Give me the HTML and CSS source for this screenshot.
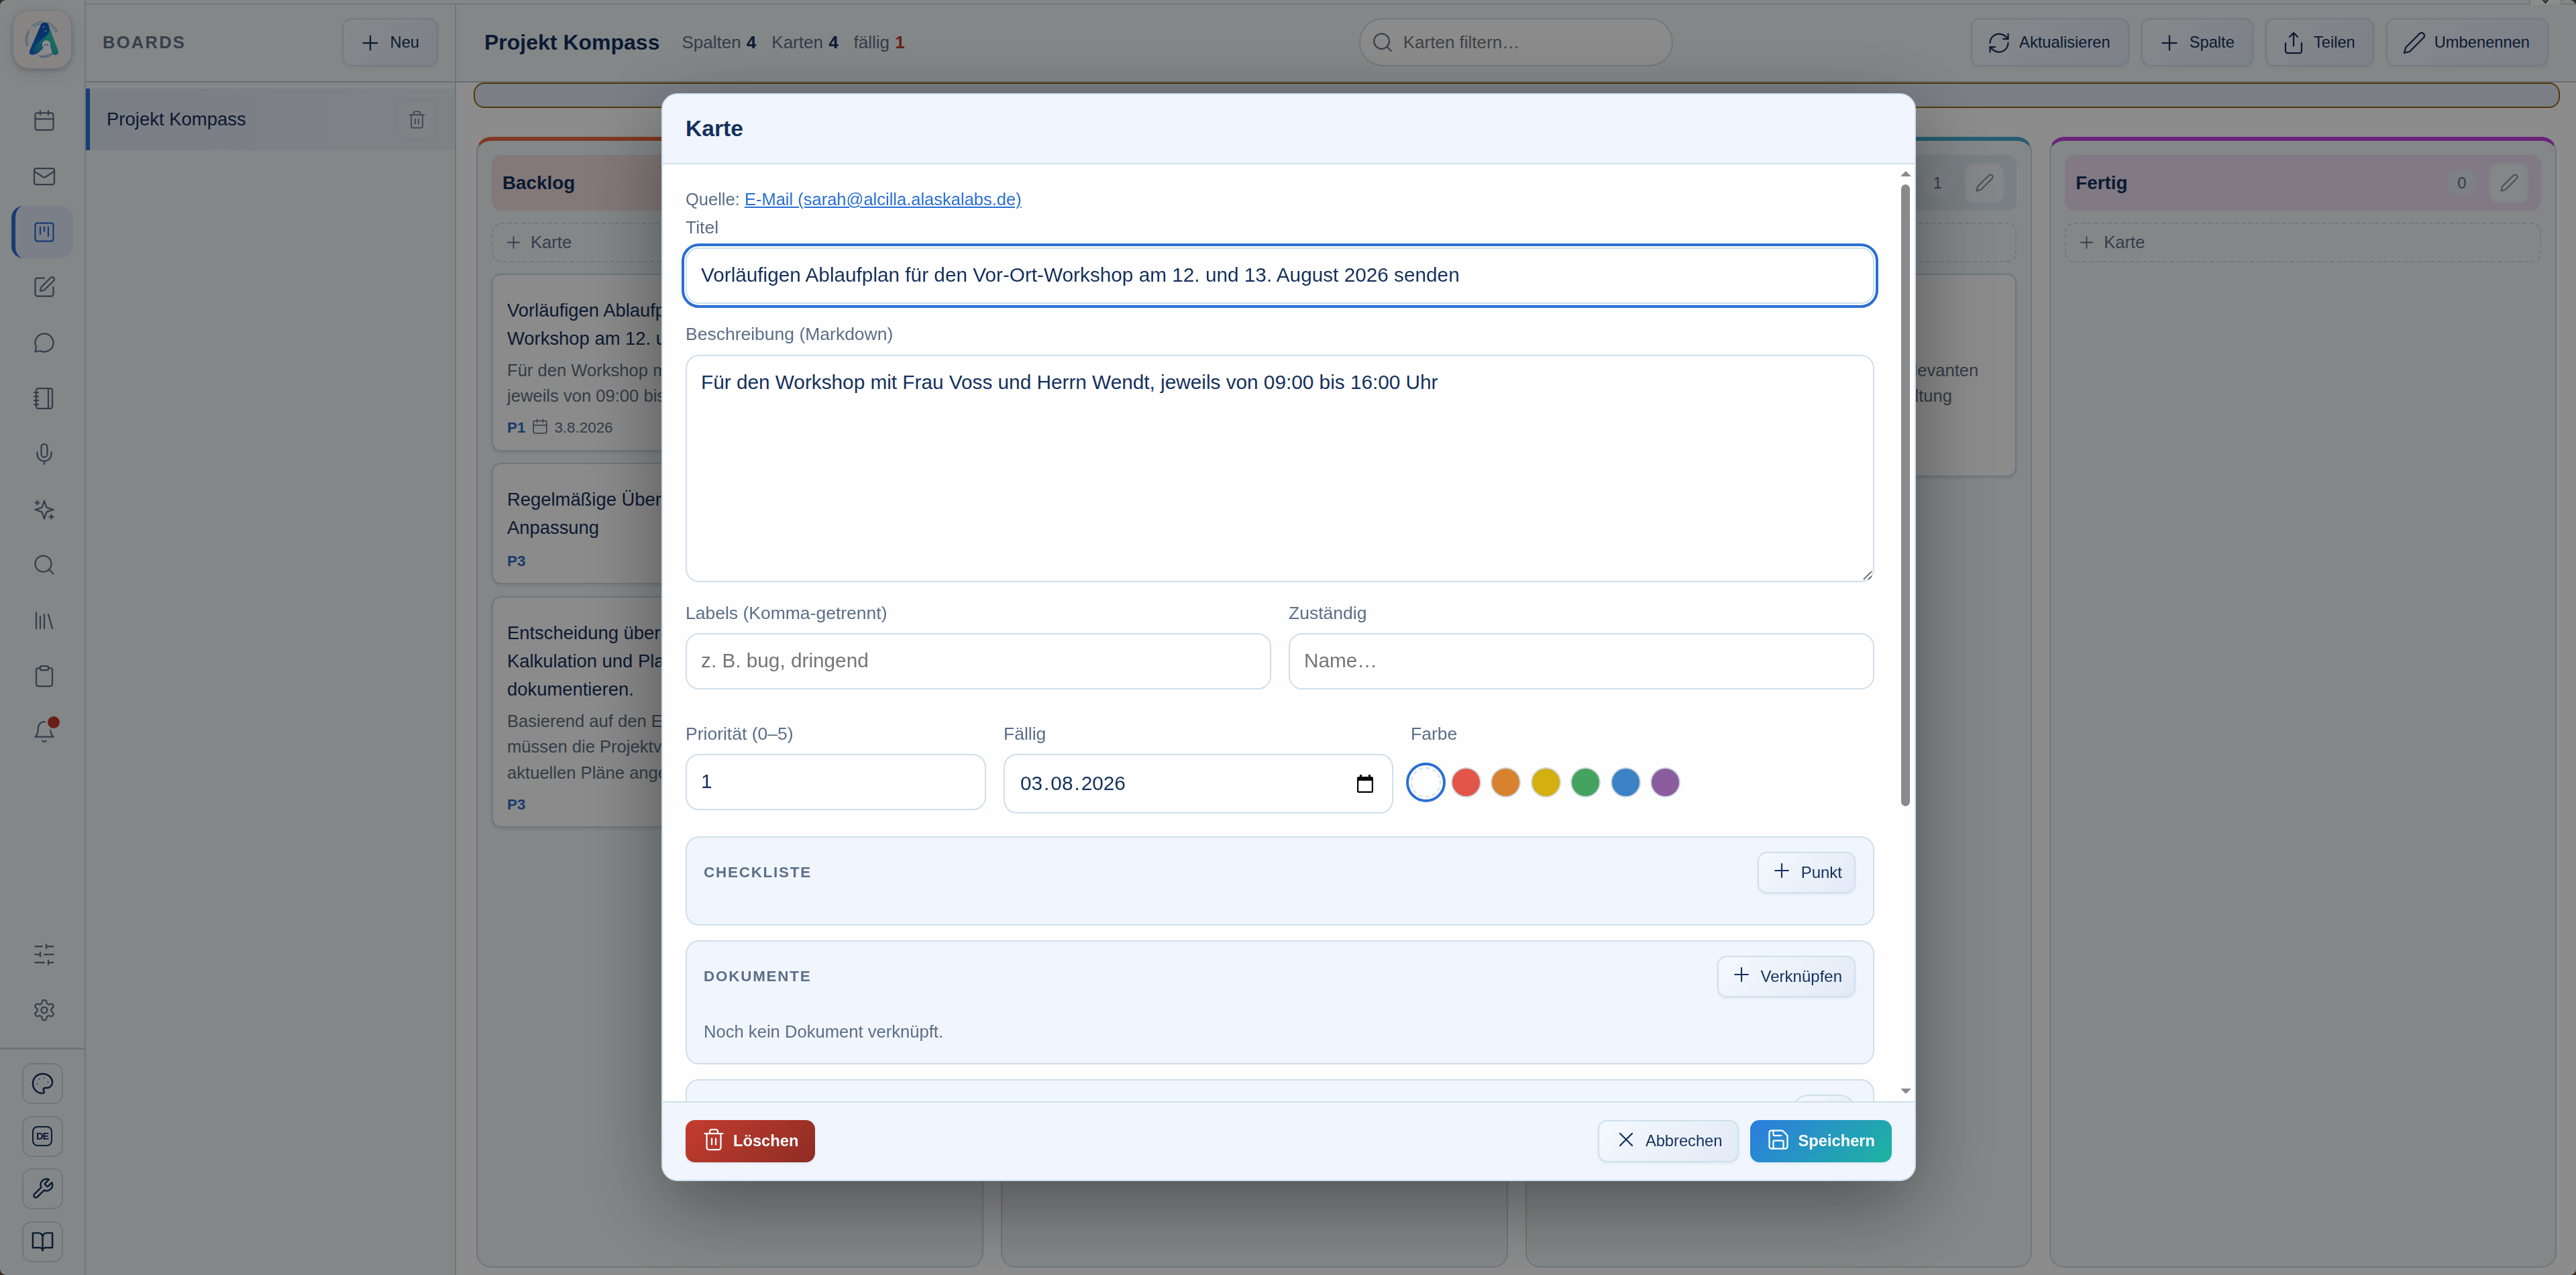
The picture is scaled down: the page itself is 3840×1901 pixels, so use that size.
FILE: index.html
```html
<!DOCTYPE html>
<html lang="de">
<head>
<meta charset="UTF-8">
<meta name="viewport" content="width=device-width, initial-scale=1.0">
<title>Projekt Kompass – Boards</title>
<link rel="stylesheet" href="styles.css">
</head>
<body>

<!-- icon set -->
<svg class="sprite" aria-hidden="true">
  <symbol id="i-calendar" viewBox="0 0 24 24"><rect x="3" y="4.2" width="18" height="17" rx="2"/><path d="M8 2.2v4M16 2.2v4M3 10.2h18"/></symbol>
  <symbol id="i-mail" viewBox="0 0 24 24"><rect x="2" y="4" width="20" height="16" rx="2"/><path d="m22 7-8.97 5.7a1.94 1.94 0 0 1-2.06 0L2 7"/></symbol>
  <symbol id="i-board" viewBox="0 0 24 24"><rect x="3" y="3" width="18" height="18" rx="2"/><path d="M8 7v7M12 7v4M16 7v9"/></symbol>
  <symbol id="i-edit" viewBox="0 0 24 24"><path d="M12 3H5a2 2 0 0 0-2 2v14a2 2 0 0 0 2 2h14a2 2 0 0 0 2-2v-7"/><path d="M18.375 2.625a1 1 0 0 1 3 3l-9.013 9.014a2 2 0 0 1-.853.505l-2.873.84a.5.5 0 0 1-.62-.62l.84-2.873a2 2 0 0 1 .506-.852z"/></symbol>
  <symbol id="i-chat" viewBox="0 0 24 24"><path d="M7.9 20A9 9 0 1 0 4 16.1L3 21z"/></symbol>
  <symbol id="i-notebook" viewBox="0 0 24 24"><path d="M2 6h4M2 10h4M2 14h4M2 18h4"/><rect x="4" y="2" width="16" height="20" rx="2"/><path d="M16 2v20"/></symbol>
  <symbol id="i-mic" viewBox="0 0 24 24"><path d="M12 2a3 3 0 0 0-3 3v7a3 3 0 0 0 6 0V5a3 3 0 0 0-3-3Z"/><path d="M19 10v2a7 7 0 0 1-14 0v-2M12 19v3"/></symbol>
  <symbol id="i-sparkles" viewBox="0 0 24 24"><path d="m12 3-1.912 5.813a2 2 0 0 1-1.275 1.275L3 12l5.813 1.912a2 2 0 0 1 1.275 1.275L12 21l1.912-5.813a2 2 0 0 1 1.275-1.275L21 12l-5.813-1.912a2 2 0 0 1-1.275-1.275L12 3Z"/><path d="M5 3v4M19 17v4M3 5h4M17 19h4"/></symbol>
  <symbol id="i-search" viewBox="0 0 24 24"><circle cx="11" cy="11" r="8"/><path d="m21 21-4.3-4.3"/></symbol>
  <symbol id="i-library" viewBox="0 0 24 24"><path d="m16 6 4 14M12 6v14M8 8v12M4 4v16"/></symbol>
  <symbol id="i-clipboard" viewBox="0 0 24 24"><rect x="8" y="2" width="8" height="4" rx="1"/><path d="M16 4h2a2 2 0 0 1 2 2v14a2 2 0 0 1-2 2H6a2 2 0 0 1-2-2V6a2 2 0 0 1 2-2h2"/></symbol>
  <symbol id="i-bell" viewBox="0 0 24 24"><path d="M18 8A6 6 0 0 0 6 8c0 7-3 9-3 9h18s-3-2-3-9"/><path d="M10.3 21a1.94 1.94 0 0 0 3.4 0"/></symbol>
  <symbol id="i-sliders" viewBox="0 0 24 24"><path d="M21 4h-7M10 4H3M21 12h-9M8 12H3M21 20h-5M12 20H3M14 2v4M8 10v4M16 18v4"/></symbol>
  <symbol id="i-gear" viewBox="0 0 24 24"><path d="M12.22 2h-.44a2 2 0 0 0-2 2v.18a2 2 0 0 1-1 1.73l-.43.25a2 2 0 0 1-2 0l-.15-.08a2 2 0 0 0-2.73.73l-.22.38a2 2 0 0 0 .73 2.73l.15.1a2 2 0 0 1 1 1.72v.51a2 2 0 0 1-1 1.74l-.15.09a2 2 0 0 0-.73 2.73l.22.38a2 2 0 0 0 2.73.73l.15-.08a2 2 0 0 1 2 0l.43.25a2 2 0 0 1 1 1.73V20a2 2 0 0 0 2 2h.44a2 2 0 0 0 2-2v-.18a2 2 0 0 1 1-1.73l.43-.25a2 2 0 0 1 2 0l.15.08a2 2 0 0 0 2.73-.73l.22-.39a2 2 0 0 0-.73-2.73l-.15-.08a2 2 0 0 1-1-1.74v-.5a2 2 0 0 1 1-1.74l.15-.09a2 2 0 0 0 .73-2.73l-.22-.38a2 2 0 0 0-2.73-.73l-.15.08a2 2 0 0 1-2 0l-.43-.25a2 2 0 0 1-1-1.73V4a2 2 0 0 0-2-2z"/><circle cx="12" cy="12" r="3"/></symbol>
  <symbol id="i-palette" viewBox="0 0 24 24"><path d="M13.4 6.5h.2M17.4 10.5h.2M8.4 7.5h.2M6.4 12.5h.2" stroke-width="1"/><path d="M12 2C6.5 2 2 6.5 2 12s4.5 10 10 10c.926 0 1.648-.746 1.648-1.688 0-.437-.18-.835-.437-1.125-.29-.289-.438-.652-.438-1.125a1.64 1.64 0 0 1 1.668-1.668h1.996c3.051 0 5.555-2.503 5.555-5.554C21.965 6.012 17.461 2 12 2z"/></symbol>
  <symbol id="i-wrench" viewBox="0 0 24 24"><path d="M14.7 6.3a1 1 0 0 0 0 1.4l1.6 1.6a1 1 0 0 0 1.4 0l3.77-3.77a6 6 0 0 1-7.94 7.94l-6.91 6.91a2.12 2.12 0 0 1-3-3l6.91-6.91a6 6 0 0 1 7.94-7.94l-3.76 3.76z"/></symbol>
  <symbol id="i-book" viewBox="0 0 24 24"><path d="M2 3h6a4 4 0 0 1 4 4v14a3 3 0 0 0-3-3H2zM22 3h-6a4 4 0 0 0-4 4v14a3 3 0 0 1 3-3h7z"/></symbol>
  <symbol id="i-plus" viewBox="0 0 24 24"><path d="M5 12h14M12 5v14"/></symbol>
  <symbol id="i-x" viewBox="0 0 24 24"><path d="M18 6 6 18M6 6l12 12"/></symbol>
  <symbol id="i-refresh" viewBox="0 0 24 24"><path d="M3 12a9 9 0 0 1 9-9 9.75 9.75 0 0 1 6.74 2.74L21 8"/><path d="M21 3v5h-5M21 12a9 9 0 0 1-9 9 9.75 9.75 0 0 1-6.74-2.74L3 16"/><path d="M8 16H3v5"/></symbol>
  <symbol id="i-share" viewBox="0 0 24 24"><path d="M4 12v8a2 2 0 0 0 2 2h12a2 2 0 0 0 2-2v-8M16 6l-4-4-4 4M12 2v13"/></symbol>
  <symbol id="i-pencil" viewBox="0 0 24 24"><path d="M17 3a2.85 2.83 0 1 1 4 4L7.5 20.5 2 22l1.5-5.5Z"/></symbol>
  <symbol id="i-trash" viewBox="0 0 24 24"><path d="M3 6h18M19 6v14a2 2 0 0 1-2 2H7a2 2 0 0 1-2-2V6M8 6V4a2 2 0 0 1 2-2h4a2 2 0 0 1 2 2v2M10 11v6M14 11v6"/></symbol>
  <symbol id="i-save" viewBox="0 0 24 24"><path d="M15.2 3a2 2 0 0 1 1.4.6l3.8 3.8a2 2 0 0 1 .6 1.4V19a2 2 0 0 1-2 2H5a2 2 0 0 1-2-2V5a2 2 0 0 1 2-2z"/><path d="M17 21v-7a1 1 0 0 0-1-1H8a1 1 0 0 0-1 1v7M7 3v4a1 1 0 0 0 1 1h7"/></symbol>
</svg>

<div class="app">
  <nav class="rail">
    <div class="logo">
      <svg viewBox="0 0 86 86">
        <defs>
          <linearGradient id="lgA" x1="0" y1="0" x2="0.3" y2="1"><stop offset="0" stop-color="#0a4fb4"/><stop offset="1" stop-color="#1070d8"/></linearGradient>
          <linearGradient id="lgB" x1="0" y1="1" x2="1" y2="0"><stop offset="0" stop-color="#1668c8"/><stop offset="0.6" stop-color="#2fc6ae"/><stop offset="1" stop-color="#1fa8b8"/></linearGradient>
        </defs>
        <g class="logo-arcs">
          <path d="M26 24a27 27 0 0 1 19-8M50 17a26 26 0 0 1 16 15M24 27a26 26 0 0 0-4 26M36 67a26 26 0 0 0 22-4"/>
          <path d="M30 24a24 24 0 0 1 14-5M52 21a24 24 0 0 1 12 12M24 31a24 24 0 0 0-2 20M40 69a24 24 0 0 0 20-5"/>
        </g>
        <path d="M41 21c2-4 9-5 11 0l15 39c2 5-6 9-9 3l-6-15-13 13c-4 4-11 6-14 4-2-2-1-5 0-7z" fill="url(#lgB)"/>
        <path d="M41 21c2-4 9-5 11 0l2 8c-2 12-18 14-24 28-1 4-8 11-5 1z" fill="url(#lgA)"/>
        <circle cx="45" cy="24" r="1.1" fill="#dff"/><circle cx="48" cy="30" r="1.1" fill="#dff"/>
        <path d="M43 50a6 6 0 0 1 12 0c0 7 3 9 2 12-6 2-15 1-21 6 4-8 12-8 10-12-2-1-3-3-3-6z" fill="#fff"/>
        <circle cx="47" cy="51" r="1" fill="#0a3f8c"/><circle cx="51" cy="51" r="1" fill="#0a3f8c"/>
      </svg>
    </div>
    <div class="rail-nav">
      <a class="rail-item"><svg class="icon"><use href="#i-calendar"/></svg></a>
      <a class="rail-item"><svg class="icon"><use href="#i-mail"/></svg></a>
      <a class="rail-item active"><svg class="icon"><use href="#i-board"/></svg></a>
      <a class="rail-item"><svg class="icon"><use href="#i-edit"/></svg></a>
      <a class="rail-item"><svg class="icon"><use href="#i-chat"/></svg></a>
      <a class="rail-item"><svg class="icon"><use href="#i-notebook"/></svg></a>
      <a class="rail-item"><svg class="icon"><use href="#i-mic"/></svg></a>
      <a class="rail-item"><svg class="icon"><use href="#i-sparkles"/></svg></a>
      <a class="rail-item"><svg class="icon"><use href="#i-search"/></svg></a>
      <a class="rail-item"><svg class="icon"><use href="#i-library"/></svg></a>
      <a class="rail-item"><svg class="icon"><use href="#i-clipboard"/></svg></a>
      <a class="rail-item"><svg class="icon"><use href="#i-bell"/></svg><span class="badge-dot"></span></a>
      <a class="rail-item push"><svg class="icon"><use href="#i-sliders"/></svg></a>
      <a class="rail-item"><svg class="icon"><use href="#i-gear"/></svg></a>
    </div>
    <div class="rail-tools">
      <button class="tool"><svg class="icon"><use href="#i-palette"/></svg></button>
      <button class="tool"><span class="lang">DE</span></button>
      <button class="tool"><svg class="icon"><use href="#i-wrench"/></svg></button>
      <button class="tool"><svg class="icon"><use href="#i-book"/></svg></button>
    </div>
  </nav>

  <div class="shell">
    <div class="topstrip">
      <span class="strip-toggle"><svg viewBox="0 0 48 7"><path d="M19 -2l5 6 5-6"/></svg></span>
    </div>
    <div class="workspace">
      <aside class="boards">
        <header class="boards-head">
          <span class="boards-title">Boards</span>
          <button class="btn"><svg class="icon"><use href="#i-plus"/></svg>Neu</button>
        </header>
        <div class="board-item">
          <span>Projekt Kompass</span>
          <button class="icon-btn"><svg class="icon"><use href="#i-trash"/></svg></button>
        </div>
      </aside>

      <main class="main">
        <header class="main-head">
          <h1>Projekt Kompass</h1>
          <div class="stats">
            <span>Spalten <b>4</b></span><span>Karten <b>4</b></span><span>fällig <b class="due">1</b></span>
          </div>
          <div class="search"><svg class="icon"><use href="#i-search"/></svg><span>Karten filtern…</span></div>
          <div class="actions">
            <button class="btn"><svg class="icon"><use href="#i-refresh"/></svg>Aktualisieren</button>
            <button class="btn"><svg class="icon"><use href="#i-plus"/></svg>Spalte</button>
            <button class="btn"><svg class="icon"><use href="#i-share"/></svg>Teilen</button>
            <button class="btn"><svg class="icon"><use href="#i-pencil"/></svg>Umbenennen</button>
          </div>
        </header>
        <div class="notice"></div>

        <div class="columns">
          <section class="column col-backlog">
            <div class="column-head"><b>Backlog</b></div>
            <button class="add-card"><svg class="icon"><use href="#i-plus"/></svg>Karte</button>
            <article class="card">
              <h3>Vorläufigen Ablaufplan für den Vor-Ort-<br>Workshop am 12. und 13. August 2026 senden</h3>
              <p>Für den Workshop mit Frau Voss und Herrn Wendt,<br>jeweils von 09:00 bis 16:00 Uhr</p>
              <div class="meta"><b>P1</b><svg class="icon"><use href="#i-calendar"/></svg>3.8.2026</div>
            </article>
            <article class="card">
              <h3>Regelmäßige Überprüfung und<br>Anpassung</h3>
              <div class="meta"><b>P3</b></div>
            </article>
            <article class="card">
              <h3>Entscheidung über<br>Kalkulation und Planung<br>dokumentieren.</h3>
              <p>Basierend auf den Ergebnissen<br>müssen die Projektverantwortlichen<br>aktuellen Pläne angepasst</p>
              <div class="meta"><b>P3</b></div>
            </article>
          </section>
          <section class="column"></section>
          <section class="column col-review">
            <div class="column-head"><b></b><span class="count">1</span><button class="icon-btn"><svg class="icon"><use href="#i-pencil"/></svg></button></div>
            <button class="add-card"><svg class="icon"><use href="#i-plus"/></svg>Karte</button>
            <article class="card">
              <h3>Unterlagen<br>prüfen</h3>
              <p>Für die Termine Ende August stehen uns die relevanten<br>Informationen und Dokumente aus einer Verwaltung<br>bereit.</p>
              <div class="meta"><b>P2</b></div>
            </article>
          </section>
          <section class="column col-done">
            <div class="column-head"><b>Fertig</b><span class="count">0</span><button class="icon-btn"><svg class="icon"><use href="#i-pencil"/></svg></button></div>
            <button class="add-card"><svg class="icon"><use href="#i-plus"/></svg>Karte</button>
          </section>
        </div>
      </main>
    </div>
  </div>
</div>

<div class="overlay">
  <div class="modal">
    <header class="modal-head">Karte</header>
    <div class="modal-scroll">
      <div class="modal-body">
        <div class="source">Quelle: <a>E-Mail (sarah@alcilla.alaskalabs.de)</a></div>
        <div class="field">
          <label>Titel</label>
          <div class="input focused">Vorläufigen Ablaufplan für den Vor-Ort-Workshop am 12. und 13. August 2026 senden</div>
        </div>
        <div class="field field-desc">
          <label>Beschreibung (Markdown)</label>
          <div class="input textarea">Für den Workshop mit Frau Voss und Herrn Wendt, jeweils von 09:00 bis 16:00 Uhr
            <svg class="grip" viewBox="0 0 14 14"><path d="M1 13L13 1M8 13l5-5"/></svg>
          </div>
        </div>
        <div class="row row-half">
          <div class="field"><label>Labels (Komma-getrennt)</label><div class="input placeholder">z. B. bug, dringend</div></div>
          <div class="field"><label>Zuständig</label><div class="input placeholder">Name…</div></div>
        </div>
        <div class="row row-meta">
          <div class="field"><label>Priorität (0–5)</label><div class="input">1</div></div>
          <div class="field"><label>Fällig</label>
            <div class="input date"><span>03</span><i>.</i><span>08</span><i>.</i><span>2026</span>
              <svg class="picker" viewBox="0 0 24 27"><path d="M4 0h3v3h10V0h3v3h1.5A2.5 2.5 0 0 1 24 5.5v19a2.5 2.5 0 0 1-2.5 2.5h-19A2.5 2.5 0 0 1 0 24.5v-19A2.5 2.5 0 0 1 2.5 3H4zM2.2 9v15.8h19.6V9z" fill-rule="evenodd"/></svg>
            </div>
          </div>
          <div class="field"><label>Farbe</label>
            <div class="swatches">
              <span class="swatch none"></span><span class="swatch red"></span><span class="swatch orange"></span><span class="swatch yellow"></span><span class="swatch green"></span><span class="swatch blue"></span><span class="swatch purple"></span>
            </div>
          </div>
        </div>
        <section class="panel panel-check">
          <div class="panel-head"><b>Checkliste</b><button class="btn btn-sm"><svg class="icon"><use href="#i-plus"/></svg>Punkt</button></div>
        </section>
        <section class="panel panel-docs">
          <div class="panel-head"><b>Dokumente</b><button class="btn btn-sm"><svg class="icon"><use href="#i-plus"/></svg>Verknüpfen</button></div>
          <p>Noch kein Dokument verknüpft.</p>
        </section>
        <section class="panel panel-more">
          <div class="panel-head"><b></b><button class="btn btn-sm btn-round"></button></div>
        </section>
      </div>
      <div class="scrollbar"><span class="arrow up"></span><span class="thumb"></span><span class="arrow down"></span></div>
    </div>
    <footer class="modal-foot">
      <button class="btn btn-foot btn-danger"><svg class="icon"><use href="#i-trash"/></svg>Löschen</button>
      <button class="btn btn-foot"><svg class="icon"><use href="#i-x"/></svg>Abbrechen</button>
      <button class="btn btn-foot btn-primary"><svg class="icon"><use href="#i-save"/></svg>Speichern</button>
    </footer>
  </div>
</div>

</body>
</html>
```

FILE: styles.css
```css
:root {
  --ink: #14305c;
  --muted: #5b6e88;
  --blue: #2a6fd4;
  --line: #cfdfec;
  --panel: #f1f6fe;
  --surface: #f0f6f8;
}

* { box-sizing: border-box; }

body {
  margin: 0;
  height: 1901px;
  overflow: hidden;
  background: #6b4a38;
  color: var(--ink);
  font-family: "Liberation Sans", Arial, sans-serif;
  font-size: 27.5px;
  line-height: 42px;
}

button { font: inherit; color: inherit; margin: 0; }
h1, h3, p { margin: 0; }

.sprite { position: absolute; width: 0; height: 0; }

.icon {
  flex: none;
  width: 36px;
  height: 36px;
  fill: none;
  stroke: currentColor;
  stroke-width: 1.5;
  stroke-linecap: round;
  stroke-linejoin: round;
}

.app {
  display: flex;
  height: 1901px;
  background: var(--surface);
  border-radius: 9px;
  overflow: hidden;
}

/* ---------- left rail ---------- */
.rail {
  flex: none;
  width: 128px;
  display: flex;
  flex-direction: column;
  border-right: 2px solid #cad6e2;
  color: #5f6f88;
}
.logo {
  width: 86px;
  height: 86px;
  margin: 16px 0 39px 20px;
  border-radius: 24px;
  background: #f6f2f0;
  box-shadow: 0 2px 8px rgba(30,30,60,.25), 0 8px 24px rgba(30,30,60,.08);
}
.logo svg { display: block; }
.logo-arcs path { fill: none; stroke: #5b9bd8; stroke-width: 1; }

.rail-nav { flex: 1; display: flex; flex-direction: column; gap: 4.8px; padding: 0 17px 17px; }
.rail-item {
  position: relative;
  flex: none;
  width: 92px;
  height: 78px;
  display: flex;
  align-items: center;
  justify-content: center;
  border-left: 6px solid transparent;
  border-radius: 18px;
}
.rail-item.active { background: #e0e8f6; border-left-color: var(--blue); color: var(--blue); }
.rail-item.push { margin-top: auto; }
.badge-dot {
  position: absolute;
  left: 45px;
  top: 13px;
  width: 24px;
  height: 24px;
  border: 3px solid var(--surface);
  border-radius: 50%;
  background: #c0392b;
}
.rail-tools {
  display: flex;
  flex-direction: column;
  align-items: center;
  gap: 17.7px;
  padding: 20px 0 19px;
  border-top: 3px solid #cad6e2;
}
.tool {
  width: 61px;
  height: 61px;
  display: flex;
  align-items: center;
  justify-content: center;
  padding: 0;
  border: 2px solid #cdd7e4;
  border-radius: 14px;
  background: transparent;
  color: var(--ink);
}
.tool .icon { width: 35px; height: 35px; stroke-width: 1.7; }
.lang {
  width: 30px;
  height: 30px;
  border: 2.5px solid;
  border-radius: 8px;
  font-size: 14.5px;
  line-height: 26px;
  font-weight: 700;
  letter-spacing: -1px;
}

/* ---------- shell ---------- */
.shell { flex: 1; min-width: 0; display: flex; flex-direction: column; }
.topstrip { position: relative; height: 7px; border-bottom: 2px solid #cad6e2; }
.strip-toggle {
  position: absolute;
  left: 3642px;
  top: 0;
  width: 49px;
  height: 7px;
  background: #fff;
  border: solid #cad6e2;
  border-width: 0 2px;
}
.strip-toggle svg { display: block; fill: none; stroke: #55606e; stroke-width: 3; }
.workspace { flex: 1; min-height: 0; display: flex; }

.btn {
  display: inline-flex;
  align-items: center;
  gap: 12px;
  height: 72px;
  padding: 0 26px 0 22px;
  border: 2px solid var(--line);
  border-radius: 14px;
  background: linear-gradient(135deg, #f4f9fd, #e3eaf7);
  box-shadow: 0 2px 4px rgba(20,48,92,.07);
  font-size: 23.7px;
  line-height: 1;
  white-space: nowrap;
}
.icon-btn {
  width: 60px;
  height: 60px;
  display: flex;
  align-items: center;
  justify-content: center;
  padding: 0;
  border: 2px solid #e6edf4;
  border-radius: 14px;
  background: #f0f4f8;
  color: #76849a;
}
.icon-btn .icon { width: 29px; height: 29px; }

/* ---------- boards list ---------- */
.boards { flex: none; width: 552px; border-right: 2px solid #cad6e2; }
.boards-head {
  height: 116px;
  display: flex;
  align-items: center;
  justify-content: space-between;
  padding: 0 25px 2px 25px;
  border-bottom: 2px solid #c3c6d0;
}
.boards-head .btn, .actions .btn { padding-top: 2px; }
.boards-title { color: #647488; font-size: 25.6px; font-weight: 700; letter-spacing: 2.2px; text-transform: uppercase; }
.board-item {
  height: 92px;
  margin-top: 9px;
  display: flex;
  align-items: center;
  justify-content: space-between;
  padding: 0 27px 0 25px;
  border-left: 6px solid var(--blue);
  background: linear-gradient(90deg, #dfe5f2, #e7edf3);
}
.board-item .icon-btn { background: #e9eef4; border-color: #dfe6ee; }

/* ---------- main ---------- */
.main { flex: 1; min-width: 0; display: flex; flex-direction: column; background: #fff; }
.main-head {
  flex: none;
  height: 116px;
  display: flex;
  align-items: center;
  padding: 0 41px 2px 42px;
  border-bottom: 2px solid #c3c6d0;
  background: var(--surface);
}
.main-head h1 { font-size: 32px; line-height: 40px; }
.stats { display: flex; gap: 23px; margin-left: 33px; font-size: 26px; color: #5f6f88; }
.stats b { margin-left: 1px; color: var(--ink); }
.stats .due { color: #c0392b; }
.search {
  display: flex;
  align-items: center;
  gap: 14px;
  width: 468px;
  height: 72px;
  margin: 0 auto 0 677px;
  padding: 0 16px;
  border: 2px solid #cfdae6;
  border-radius: 36px;
  background: #fdfdfe;
  color: #75787c;
  font-size: 26px;
}
.search .icon { width: 34px; height: 34px; color: #5f7186; }
.actions { display: flex; gap: 18px; }

.notice {
  flex: none;
  height: 38px;
  margin: 0 24px 43px 26px;
  border: 2px solid #96690f;
  border-radius: 16px;
  background: #e1e8f3;
}

.columns {
  flex: 1;
  min-height: 0;
  display: grid;
  grid-template-columns: repeat(4, 1fr);
  gap: 26px;
  padding: 0 29px 11px 30px;
}
.column {
  --accent: #4aa564;
  --tint: #dff0e6;
  min-width: 0;
  display: flex;
  flex-direction: column;
  gap: 17.5px;
  padding: 21px;
  border: 2px solid #cad8e4;
  border-top: 6px solid var(--accent);
  border-radius: 22px;
  background: var(--surface);
}
.col-backlog { --accent: #e8693f; --tint: #efdcdc; }
.col-review { --accent: #47a8cc; --tint: #dbe9ee; }
.col-done { --accent: #c043dc; --tint: #ebdcf0; }

.column-head {
  display: flex;
  align-items: center;
  height: 83px;
  padding: 0 18px 0 16px;
  border-radius: 14px;
  background: var(--tint);
}
.column-head b { flex: 1; font-size: 27.8px; }
.column-head .icon-btn { margin-left: 17px; }
.count {
  min-width: 46px;
  height: 39px;
  border-radius: 20px;
  background: #e4ebf2;
  color: #5f6f88;
  font-size: 24px;
  line-height: 39px;
  text-align: center;
}
.add-card {
  display: flex;
  align-items: center;
  gap: 11px;
  height: 59px;
  padding: 0 16px;
  border: 2px dashed #cbdbe8;
  border-radius: 14px;
  background: transparent;
  color: #5f6f88;
  font-size: 25.6px;
}
.add-card .icon { width: 29px; height: 29px; }
.card {
  padding: 32px 21px 15px;
  border: 2px solid #cbd9e6;
  border-radius: 14px;
  background: #fdfdfd;
  box-shadow: 0 2px 4px rgba(20,48,92,.12);
  white-space: nowrap;
}
.card h3 { font-size: 27.4px; font-weight: 400; }
.card p { margin-top: 7px; color: #5f6f80; font-size: 25.6px; line-height: 38.4px; }
.meta {
  display: flex;
  align-items: center;
  gap: 8px;
  height: 35px;
  margin-top: 11px;
  color: #5f6f88;
  font-size: 22.4px;
}
.meta b { color: #2b6cc4; margin-right: 1px; }
.meta .icon { width: 26px; height: 26px; margin-top: -4px; }

/* ---------- modal ---------- */
.overlay {
  position: fixed;
  inset: 0;
  display: grid;
  place-items: center;
  padding: 0 0 1px 2px;
  background: rgba(0,0,0,.45);
}
.modal {
  width: 1870px;
  height: 1622px;
  display: flex;
  flex-direction: column;
  overflow: hidden;
  border: 2px solid #cfe0f0;
  border-radius: 24px;
  background: #fefefe;
  box-shadow: 0 36px 120px rgba(0,0,0,.4);
}
.modal-head {
  flex: none;
  height: 104px;
  padding: 0 34px;
  border-bottom: 2px solid var(--line);
  background: var(--panel);
  font-size: 33.6px;
  font-weight: 700;
  line-height: 101px;
}
.modal-scroll { flex: 1; min-height: 0; display: flex; overflow: hidden; }
.modal-body { flex: 1; min-width: 0; padding: 31px 30px 0 34px; }
.source { margin-bottom: 1.5px; color: var(--muted); font-size: 25.5px; line-height: 42px; }
.source a { color: var(--blue); text-decoration: underline; }

.field label {
  display: block;
  margin-bottom: 11px;
  color: var(--muted);
  font-size: 26.5px;
  line-height: 38px;
}
.input {
  height: 84px;
  padding: 0 21px;
  border: 2px solid var(--line);
  border-radius: 20px;
  background: #fff;
  font-size: 29.75px;
  line-height: 78px;
}
.input.focused { outline: 4px solid var(--blue); outline-offset: 2px; }
.placeholder { color: #757575; }
.field-desc { margin-top: 26px; }
.field-desc label { margin-bottom: 12px; }
.textarea { position: relative; height: 339px; padding-top: 18px; line-height: 42px; }
.grip { position: absolute; right: 1px; bottom: 1px; width: 14px; height: 14px; stroke: #444; stroke-width: 1.5; }

.row { display: grid; gap: 26px; }
.row-half { grid-template-columns: 1fr 1fr; margin-top: 27px; }
.row-meta { grid-template-columns: 448px 581px 1fr; margin-top: 47px; }
.date { display: flex; align-items: center; height: 89px; padding: 0 28px 0 23px; }
.date i { font-style: normal; margin: 0 2px; }
.picker { width: 24px; height: 27px; margin-left: auto; fill: #000; }

.swatches { display: flex; align-items: center; gap: 14.5px; height: 86px; }
.swatch { width: 45px; height: 45px; border: 2px solid #cfd9e2; border-radius: 50%; }
.swatch.none { border: 2px dashed var(--line); outline: 4px solid var(--blue); outline-offset: 3px; }
.red { background: #e25549; }
.orange { background: #d8822f; }
.yellow { background: #d3b010; }
.green { background: #44a35e; }
.blue { background: #3d82c4; }
.purple { background: #8b5d9e; }

.panel {
  padding: 21px 26px 0 25px;
  border: 2px solid var(--line);
  border-radius: 20px;
  background: var(--panel);
}
.panel-check { height: 133px; margin-top: 34px; }
.panel-docs { height: 185px; margin-top: 22px; }
.panel-more { height: 185px; margin-top: 22px; }
.panel-head { display: flex; align-items: center; justify-content: space-between; }
.panel-head b { color: var(--muted); font-size: 22.4px; letter-spacing: 1.8px; text-transform: uppercase; }
.panel p { margin-top: 32px; color: var(--muted); font-size: 25.6px; line-height: 38px; }

.btn-sm { height: 62px; padding: 0 18px 0 17px; font-size: 24px; }
.btn-sm .icon { width: 34px; height: 34px; margin-top: -6px; }
.btn-round { width: 94px; border-radius: 24px; }

.scrollbar { flex: none; width: 30px; display: flex; flex-direction: column; align-items: center; padding: 10px 6px 11px 9px; }
.arrow { width: 0; height: 0; border: 8px solid transparent; }
.arrow.up { border-top: 0; border-bottom-color: #8a8a8a; }
.arrow.down { border-bottom: 0; border-top-color: #8a8a8a; margin-top: auto; }
.thumb { width: 13px; height: 927px; margin-top: 12px; border-radius: 7px; background: #8a8a8a; }

.modal-foot {
  flex: none;
  display: flex;
  gap: 17px;
  height: 117px;
  padding: 26px 34px 0;
  border-top: 2px solid var(--line);
  background: var(--panel);
}
.btn-foot { height: 63px; padding: 0 23px 0 22px; gap: 11px; }
.btn-foot .icon { margin-top: -5px; }
.btn-danger {
  margin-right: auto;
  border-color: transparent;
  background: linear-gradient(135deg, #c43c2e, #8e2d24) border-box;
  color: #fff;
  font-weight: 700;
}
.btn-primary {
  border-color: transparent;
  background: linear-gradient(135deg, #2d7be0, #1db5a0) border-box;
  color: #fff;
  font-weight: 700;
}
```
